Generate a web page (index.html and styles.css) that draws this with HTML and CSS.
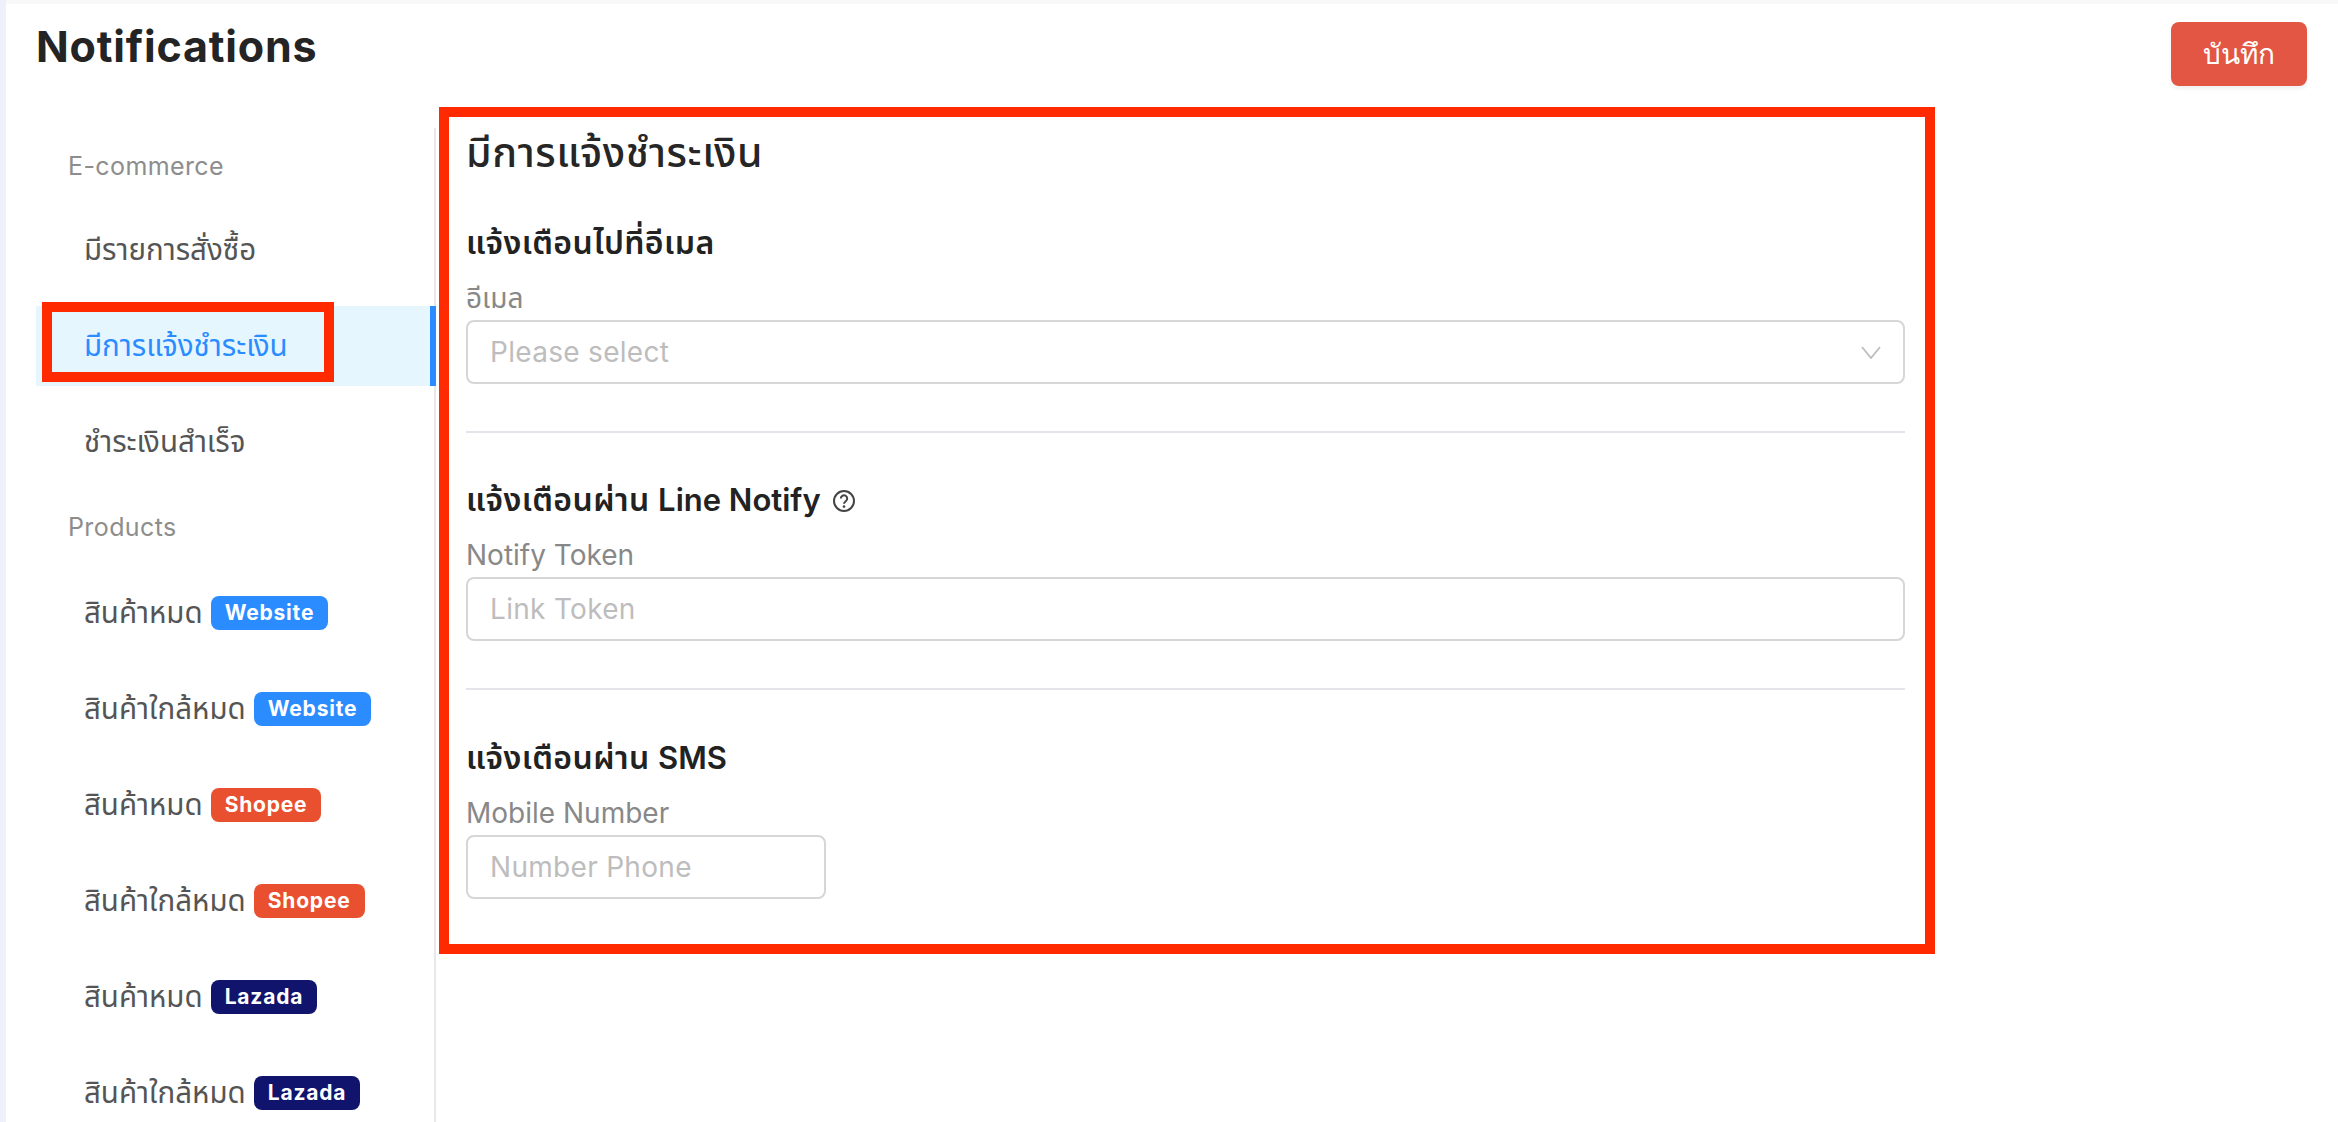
FILE: index.html
```html
<!DOCTYPE html>
<html lang="th">
<head>
<meta charset="utf-8">
<title>Notifications</title>
<link rel="stylesheet" href="styles.css">
</head>
<body>
<div class="page">
  <header class="header">
    <h1 class="title">Notifications</h1>
    <button class="save" type="button">บันทึก</button>
  </header>
  <div class="layout">
    <nav class="sidebar">
      <div class="group">E-commerce</div>
      <a class="item">มีรายการสั่งซื้อ</a>
      <a class="item active">มีการแจ้งชำระเงิน</a>
      <a class="item">ชำระเงินสำเร็จ</a>
      <div class="group group-next">Products</div>
      <a class="item">สินค้าหมด <span class="badge web">Website</span></a>
      <a class="item">สินค้าใกล้หมด <span class="badge web">Website</span></a>
      <a class="item">สินค้าหมด <span class="badge shopee">Shopee</span></a>
      <a class="item">สินค้าใกล้หมด <span class="badge shopee">Shopee</span></a>
      <a class="item">สินค้าหมด <span class="badge lazada">Lazada</span></a>
      <a class="item">สินค้าใกล้หมด <span class="badge lazada">Lazada</span></a>
    </nav>
    <main class="content">
      <h2 class="heading">มีการแจ้งชำระเงิน</h2>
      <section class="block first">
        <h3 class="sub">แจ้งเตือนไปที่อีเมล</h3>
        <label class="label">อีเมล</label>
        <div class="field select">
          <span class="ph">Please select</span>
          <svg class="chev" viewBox="0 0 20 13" width="20" height="13"><path d="M1 1l9 11 9-11" fill="none" stroke="#bdbdbd" stroke-width="1.8"/></svg>
        </div>
      </section>
      <section class="block">
        <h3 class="sub"><span>แจ้งเตือนผ่าน <span class="latin">Line Notify</span></span>
          <svg class="help" viewBox="0 0 24 24" width="24" height="24"><circle cx="12" cy="12" r="10" fill="none" stroke="#444" stroke-width="2"/><path d="M8.8 9.6a3.2 3.2 0 1 1 5 2.6c-1.1.8-1.8 1.3-1.8 2.6" fill="none" stroke="#444" stroke-width="2"/><circle cx="12" cy="17.6" r="1.3" fill="#444"/></svg>
        </h3>
        <label class="label">Notify Token</label>
        <div class="field"><span class="ph">Link Token</span></div>
      </section>
      <section class="block last">
        <h3 class="sub"><span>แจ้งเตือนผ่าน <span class="latin">SMS</span></span></h3>
        <label class="label">Mobile Number</label>
        <div class="field phone"><span class="ph">Number Phone</span></div>
      </section>
    </main>
  </div>
  <div class="mark mark-nav"></div>
  <div class="mark mark-form"></div>
</div>
</body>
</html>
```
FILE: styles.css
```css
* { box-sizing: border-box; }
html, body { margin: 0; height: 100%; overflow: hidden; }
body {
  background: #eef0fa;
  font-family: "Inter", "Noto Sans", "Noto Sans Thai", sans-serif;
  color: #222;
}
.page {
  position: relative;
  margin-left: 6px;
  height: 1122px;
  background: #fff;
  border-top: 4px solid #f8f8f8;
  overflow: hidden;
}
.header {
  display: flex;
  justify-content: space-between;
  align-items: flex-start;
  height: 124px;
  padding: 14px 31px 0 30px;
}
.title {
  margin: 0;
  font-size: 43px;
  line-height: 56px;
  font-weight: 700;
  letter-spacing: 0.8px;
  color: #242424;
}
.save {
  width: 136px;
  height: 64px;
  margin-top: 4px;
  border: 0;
  border-radius: 8px;
  background: #e35643;
  color: #fff;
  font: 500 28px/1 "Inter", "Noto Sans", sans-serif;
  box-shadow: 0 3px 4px rgba(0, 0, 0, .06);
}
.layout { display: flex; align-items: flex-start; }
.sidebar {
  width: 400px;
  height: 1000px;
  margin-left: 30px;
  border-right: 2px solid #e8e8e8;
  flex: none;
}
.group {
  height: 40px;
  margin: 18px 0 24px;
  padding-left: 32px;
  font-size: 25px;
  line-height: 40px;
  letter-spacing: 0.4px;
  color: #8d8d8d;
}
.group-next { margin: 25px 0 26px; }
.item {
  display: flex;
  align-items: center;
  gap: 8px;
  height: 80px;
  margin-bottom: 16px;
  padding: 2px 0 0 48px;
  font-size: 29.5px;
  color: #555;
  white-space: nowrap;
}
.active {
  background: #e5f6ff;
  color: #2a8cff;
  border-right: 6px solid #2a8cff;
  margin-right: -2px;
}
.badge {
  display: inline-block;
  height: 34px;
  margin-top: -2px;
  padding: 0 14px;
  border-radius: 8px;
  color: #fff;
  font-size: 21px;
  font-weight: 700;
  line-height: 34px;
  letter-spacing: 0.8px;
}
.web { background: #2a8cff; }
.shopee { background: #e9502f; }
.lazada { background: #10146c; }
.content {
  width: 1439px;
  margin-left: 30px;
  flex: none;
}
.heading {
  margin: 0;
  font-size: 41px;
  line-height: 48px;
  font-weight: 500;
  letter-spacing: 0.6px;
  color: #262626;
}
.block { padding-top: 47px; border-top: 2px solid #e4e4ea; margin-top: 47px; }
.block.first { border-top: 0; padding-top: 0; margin-top: 47px; }
.block.last { padding-top: 48px; }
.sub {
  display: flex;
  align-items: center;
  gap: 11px;
  margin: 0;
  font-size: 32px;
  line-height: 40px;
  font-weight: 600;
  letter-spacing: 0.4px;
  color: #222;
}
.latin { font-size: 31px; letter-spacing: 0; }
.help { flex: none; margin-top: 2px; }
.label {
  display: block;
  margin-top: 17px;
  font-size: 28px;
  line-height: 36px;
  color: #888;
}
.field {
  display: flex;
  align-items: center;
  justify-content: space-between;
  height: 64px;
  margin-top: 4px;
  padding: 0 22px 0 22px;
  border: 2px solid #d6d6d6;
  border-radius: 8px;
}
.phone { width: 360px; }
.ph { font-size: 28px; letter-spacing: 0.3px; color: #bdbdbd; }
.mark {
  position: absolute;
  border: 10px solid #ff2a00;
  pointer-events: none;
}
.mark-nav { left: 36px; top: 298px; width: 292px; height: 80px; }
.mark-form { left: 433px; top: 103px; width: 1496px; height: 847px; }
```
